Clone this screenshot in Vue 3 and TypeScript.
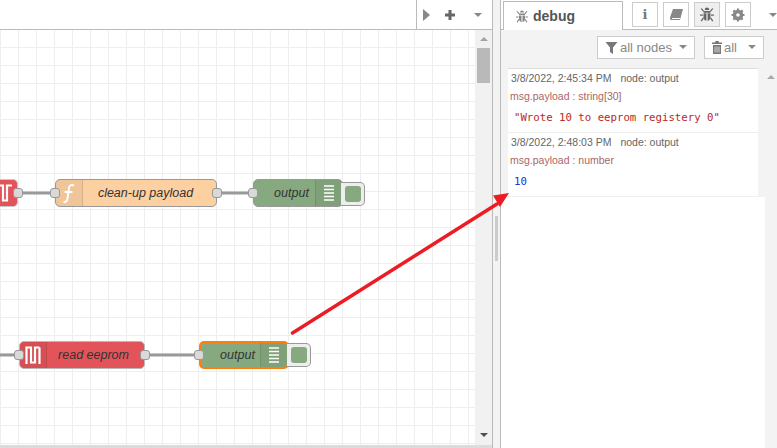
<template>
  <div class="editor">
    <section class="workspace">
      <header class="ws-tabs">
        <div class="ws-spacer"></div>
        <div class="ws-tools">
          <span class="tri-right"></span>
          <svg class="plus" width="12" height="12" viewBox="0 0 12 12"><path d="M4.5 1h3v3.5H11v3H7.500V11h-3V7.500H1v-3h3.500z" fill="#666" /></svg>
          <span class="caret"></span>
        </div>
      </header>
      <div class="ws-body">
        <div class="canvas">
          <svg class="wires" width="475" height="416" viewBox="0 0 475 416">
            <path v-for="w in wires" :key="w" :d="w" stroke="#999" stroke-width="3" fill="none" />
          </svg>
          <div
            v-for="n in nodes"
            :key="n.id"
            class="node"
            :class="[n.kind, { selected: n.selected }]"
            :style="{ left: n.x + 'px', top: n.y + 'px', width: n.w + 'px' }"
          >
            <template v-if="n.kind === 'fn'">
              <span class="icon-cell left">
                <svg width="14" height="21" viewBox="0 0 14 21"><path d="M12 2.500C9 1 7.500 2.500 7 5L5.500 15.500C5 18.500 3.500 19.500 1.500 19M2.500 9h8" stroke="#fff" stroke-width="2" fill="none" /></svg>
              </span>
              <span class="label">{{ n.label }}</span>
            </template>
            <template v-else-if="n.kind === 'serial'">
              <span class="icon-cell left">
                <svg width="16" height="20" viewBox="0 0 16 20"><path d="M1.500 19V2.500h4.500v15h4V2.500H14.500" stroke="#fff" stroke-width="2.200" fill="none" /><path d="M14.500 2.500V19" stroke="#fff" stroke-width="2.200" /></svg>
              </span>
              <span class="label">{{ n.label }}</span>
            </template>
            <template v-else>
              <span class="label">{{ n.label }}</span>
              <span class="icon-cell right">
                <svg width="12" height="18" viewBox="0 0 12 18"><path d="M1 2h10M1 5.500h10M1 9h10M1 12.500h10M1 16h10" stroke="#fff" stroke-width="1.500" /></svg>
              </span>
            </template>
            <span v-if="n.kind !== 'debug'" class="port out"></span>
            <span v-if="n.hasIn" class="port in"></span>
            <span v-if="n.kind === 'debug'" class="toggle"><i></i></span>
          </div>
          <div class="stub">
            <svg width="16" height="20" viewBox="0 0 16 20"><path d="M-2 2.500h6v15h4V2.500h5" stroke="#fff" stroke-width="2.200" fill="none" /></svg>
            <span class="port out"></span>
          </div>
        </div>
        <div class="vscroll">
          <span class="arrow up"></span>
          <div class="thumb"></div>
          <span class="arrow down"></span>
        </div>
      </div>
      <div class="hscroll"></div>
    </section>

    <div class="separator"><div class="grip"></div></div>

    <aside class="sidebar">
      <header class="side-tabs">
        <div class="debug-tab">
          <svg width="12" height="13" viewBox="0 0 24 26"><path :d="bugPath" fill="#888" /></svg>
          <span>debug</span>
        </div>
        <div class="side-buttons">
          <button class="side-btn info">i</button>
          <button class="side-btn">
            <svg width="15" height="14" viewBox="0 0 15 14"><path d="M4 1h10L11 12H2C.800 12 .800 9.500 1.500 8z" fill="#888" /><path d="M3 10.500h8.500" stroke="#fff" /></svg>
          </button>
          <button class="side-btn active">
            <svg width="14" height="15" viewBox="0 0 24 26"><path :d="bugPath" fill="#666" /></svg>
          </button>
          <button class="side-btn">
            <svg width="14" height="14" viewBox="0 0 14 14"><circle cx="7" cy="7" r="3.800" fill="none" stroke="#888" stroke-width="3" /><path d="M7 .500v13M.500 7h13M2.400 2.400l9.200 9.200M11.600 2.400l-9.200 9.200" stroke="#888" stroke-width="2.200" /><circle cx="7" cy="7" r="1.800" fill="#fff" /></svg>
          </button>
          <span class="caret side-caret"></span>
        </div>
      </header>
      <div class="side-toolbar">
        <button class="tool-btn">
          <svg width="13" height="13" viewBox="0 0 13 13"><path d="M.500 1h12L8 6.500V13L5 11V6.500z" fill="#777" /></svg>
          <span>all nodes</span>
          <span class="caret small"></span>
        </button>
        <button class="tool-btn">
          <svg width="10" height="13" viewBox="0 0 10 13"><path d="M3.500 0h3l.500 1.500h3V3H0V1.500h3zM1 4h8v9H1zM3 5.500v6M5 5.500v6M7 5.500v6" fill="#777" /><path d="M3 5.500v6M5 5.500v6M7 5.500v6" stroke="#f3f3f3" stroke-width=".8" /></svg>
          <span>all</span>
          <span class="caret small gap"></span>
        </button>
      </div>
      <div class="side-content">
        <div class="messages">
          <div v-for="m in messages" :key="m.time" class="msg">
            <div class="meta"><span class="time">{{ m.time }}</span><span>node: output</span></div>
            <div class="topic">msg.payload : {{ m.type }}</div>
            <div class="value" :class="m.cls">{{ m.value }}</div>
          </div>
        </div>
        <div class="msg-scroll"><span class="arrow up"></span></div>
      </div>
    </aside>

    <!-- annotation drawn on top of the screenshot -->
    <svg class="annotation" width="777" height="448" viewBox="0 0 777 448">
      <path d="M292.500 333 L497 204" stroke="#ed1c24" stroke-width="3.500" stroke-linecap="round" />
      <path d="M509 193 L493 195.500 L500 207 z" fill="#ed1c24" />
    </svg>
  </div>
</template>

<script setup lang="ts">
interface FlowNode {
  id: string
  kind: 'fn' | 'serial' | 'debug'
  label: string
  x: number
  y: number
  w: number
  hasIn: boolean
  selected?: boolean
}

const bugPath =
  'M8 5a4 4 0 0 1 8 0zM6 7h12v3H6zM6 11h5v13C8 24 6 21 6 17zM13 11h5v6c0 4-2 7-5 7zM1 3l2-1 4 5-2 1zM23 3l-2-1-4 5 2 1zM0 13h5v2H0zM19 13h5v2h-5zM1 24l4-6 2 1-4 6zM23 24l-4-6-2 1 4 6z'

const nodes: FlowNode[] = [
  { id: 'cleanup', kind: 'fn', label: 'clean-up payload', x: 55, y: 149, w: 162, hasIn: true },
  { id: 'out1', kind: 'debug', label: 'output', x: 253, y: 149, w: 90, hasIn: true },
  { id: 'read', kind: 'serial', label: 'read eeprom', x: 19, y: 311, w: 126, hasIn: true },
  { id: 'out2', kind: 'debug', label: 'output', x: 199, y: 311, w: 90, hasIn: true, selected: true },
]

const wires = [
  'M18 163H55',
  'M217 163H253',
  'M0 325H19',
  'M145 325H199',
]

const messages = [
  { time: '3/8/2022, 2:45:34 PM', type: 'string[30]', value: '"Wrote 10 to eeprom registery 0"', cls: 'str' },
  { time: '3/8/2022, 2:48:03 PM', type: 'number', value: '10', cls: 'num' },
]
</script>

<style>
html,
body {
  margin: 0;
  background: #fff;
  overflow: hidden;
}
</style>

<style scoped>
.editor {
  position: relative;
  display: flex;
  width: 777px;
  height: 448px;
  overflow: hidden;
  font-family: "Liberation Sans", Arial, sans-serif;
  color: #555;
}

.workspace {
  width: 492px;
  flex: none;
  display: flex;
  flex-direction: column;
}

.ws-tabs {
  height: 29px;
  flex: none;
  display: flex;
  border-bottom: 1px solid #bbb;
  background: #fff;
}

.ws-spacer {
  width: 416px;
  flex: none;
  border-right: 1px solid #bbb;
  box-sizing: border-box;
  width: 417px;
}

.ws-tools {
  flex: 1;
  display: flex;
  align-items: center;
  padding-left: 6px;
}

.tri-right {
  width: 0;
  height: 0;
  border-left: 7px solid #888;
  border-top: 6px solid transparent;
  border-bottom: 6px solid transparent;
}

.plus {
  margin-left: 14px;
}

.caret {
  width: 0;
  height: 0;
  border-top: 4px solid #888;
  border-left: 4px solid transparent;
  border-right: 4px solid transparent;
}

.ws-tools .caret {
  margin-left: 18px;
}

.ws-body {
  flex: 1;
  min-height: 0;
  display: flex;
}

.canvas {
  position: relative;
  width: 475px;
  flex: none;
  overflow: hidden;
  background-color: #fff;
  background-image:
    linear-gradient(to right, #eee 1px, transparent 1px),
    linear-gradient(to bottom, #eee 1px, transparent 1px);
  background-size: 18px 18px;
  background-position: 0 -1px;
}

.wires {
  position: absolute;
  left: 0;
  top: 0;
}

.node {
  position: absolute;
  height: 28px;
  box-sizing: border-box;
  border: 1px solid #999;
  border-radius: 5px;
  display: flex;
  align-items: center;
  font-size: 12.500px;
  font-style: italic;
  color: #333;
}

.node.fn {
  background: #fdd0a2;
}

.node.serial {
  background: #e2545a;
  border-color: #b9b9b9;
}

.node.debug {
  background: #87a980;
}

.node.selected {
  border: 2px solid #ff7f0e;
}

.icon-cell {
  align-self: stretch;
  display: flex;
  align-items: center;
  justify-content: center;
  width: 26px;
  flex: none;
  background: rgba(0, 0, 0, 0.05);
}

.icon-cell.left {
  border-right: 1px solid rgba(0, 0, 0, 0.1);
  border-radius: 4px 0 0 4px;
}

.icon-cell.right {
  border-left: 1px solid rgba(0, 0, 0, 0.1);
  border-radius: 0 4px 4px 0;
}

.label {
  flex: 1;
  text-align: center;
  white-space: nowrap;
}

.node.debug .label {
  padding-left: 14px;
}

.node.serial .label {
  padding-right: 4px;
}

.node.fn .label {
  padding-right: 8px;
}

.port {
  position: absolute;
  width: 10px;
  height: 10px;
  box-sizing: border-box;
  top: 8px;
  background: #d9d9d9;
  border: 1px solid #999;
  border-radius: 3px;
}

.port.in {
  left: -6px;
}

.port.out {
  right: -6px;
}

.node.selected .port {
  top: 7px;
}

.node.selected .port.in {
  left: -7px;
}

.toggle {
  position: absolute;
  left: 100%;
  top: 2px;
  margin-left: -1px;
  width: 24px;
  height: 24px;
  box-sizing: border-box;
  background: #eee;
  border: 1px solid #999;
  border-left: none;
  border-radius: 0 5px 5px 0;
  display: flex;
  align-items: center;
  justify-content: center;
}

.node.selected .toggle {
  top: 0;
  margin-left: 0;
}

.toggle i {
  width: 16px;
  height: 16px;
  border-radius: 3px;
  background: #87a980;
}

.stub {
  position: absolute;
  left: -1px;
  top: 149px;
  width: 19px;
  height: 28px;
  box-sizing: border-box;
  background: #e2545a;
  border: 1px solid #c9c9c9;
  border-left: none;
  border-radius: 0 5px 5px 0;
  display: flex;
  align-items: center;
}

.stub .port {
  top: 8px;
}

.vscroll {
  flex: 1;
  position: relative;
  background: #f1f1f1;
}

.thumb {
  position: absolute;
  left: 2px;
  right: 2px;
  top: 18px;
  height: 35px;
  background: #b9b9b9;
}

.arrow {
  position: absolute;
  left: 50%;
  margin-left: -4px;
  width: 0;
  height: 0;
  border-left: 4px solid transparent;
  border-right: 4px solid transparent;
}

.arrow.up {
  top: 7px;
  border-bottom: 4px solid #a3a3a3;
}

.arrow.down {
  bottom: 8px;
  border-top: 4px solid #505050;
}

.hscroll {
  height: 3px;
  flex: none;
  background: #dcdcdc;
}

.separator {
  width: 9px;
  flex: none;
  box-sizing: border-box;
  border-left: 1px solid #bbb;
  border-right: 1px solid #bbb;
  background: #f3f3f3;
  position: relative;
}

.grip {
  position: absolute;
  left: 2px;
  top: 216px;
  width: 3px;
  height: 45px;
  background: #ccc;
}

.sidebar {
  flex: 1;
  min-width: 0;
  display: flex;
  flex-direction: column;
  background: #f3f3f3;
}

.side-tabs {
  height: 29px;
  flex: none;
  box-sizing: content-box;
  display: flex;
  align-items: flex-start;
  border-bottom: 1px solid #bbb;
  background: #fff;
  padding-left: 2px;
}

.debug-tab {
  width: 120px;
  height: 29px;
  box-sizing: border-box;
  margin-top: 1px;
  height: 29px;
  background: #fff;
  border: 1px solid #bbb;
  border-bottom: none;
  display: flex;
  align-items: center;
  padding-left: 12px;
  gap: 5px;
  font-size: 14px;
  font-weight: 700;
  color: #555;
}

.side-buttons {
  display: flex;
  align-items: center;
  gap: 5px;
  margin-left: 9px;
  margin-top: 2px;
}

.side-btn {
  width: 26px;
  height: 25px;
  padding: 0;
  box-sizing: border-box;
  background: #fff;
  border: 1px solid #ccc;
  display: flex;
  align-items: center;
  justify-content: center;
}

.side-btn.active {
  background: #efefef;
}

.side-btn.info {
  font-family: "DejaVu Serif", serif;
  font-weight: 700;
  font-size: 13px;
  color: #777;
}

.side-caret {
  margin-left: 13px;
}

.side-toolbar {
  height: 34px;
  flex: none;
  display: flex;
  justify-content: flex-end;
  align-items: center;
  gap: 9px;
  padding-right: 13px;
}

.tool-btn {
  height: 23px;
  padding: 0 7px;
  background: #fff;
  border: 1px solid #ccc;
  display: flex;
  align-items: center;
  gap: 2px;
  font-family: inherit;
  font-size: 13px;
  color: #888;
}

.caret.small {
  margin-left: 5px;
}

.caret.small.gap {
  margin-left: 9px;
}

.side-content {
  flex: 1;
  min-height: 0;
  position: relative;
  padding: 4px 0 0 7px;
}

.messages {
  width: 250px;
  height: 127px;
  background: #fff;
  border-top: 1px solid #ddd;
}

.side-content::after {
  content: "";
  position: absolute;
  left: 0;
  top: 133px;
  width: 264px;
  bottom: 0;
  background: #fff;
}

.msg {
  height: 64px;
  box-sizing: border-box;
  border-bottom: 1px solid #eee;
  padding: 3px 0 0 2px;
  font-size: 10.500px;
}

.meta {
  height: 13px;
  line-height: 13px;
  padding-left: 1px;
  color: #666;
}

.time {
  margin-right: 9px;
}

.topic {
  margin-top: 5px;
  height: 13px;
  line-height: 13px;
  color: #a66;
}

.value {
  margin-top: 8px;
  padding-left: 4px;
  font-family: "DejaVu Sans Mono", monospace;
  font-size: 10.700px;
  line-height: 14px;
  white-space: nowrap;
}

.value.str {
  color: #b72828;
}

.value.num {
  color: #2033d6;
}

.msg-scroll {
  position: absolute;
  right: 0;
  top: 0;
  width: 12px;
  height: 100px;
}

.msg-scroll .arrow.up {
  top: 11px;
  border-bottom-color: #aaa;
}

.annotation {
  position: absolute;
  left: 0;
  top: 0;
  pointer-events: none;
}
</style>
